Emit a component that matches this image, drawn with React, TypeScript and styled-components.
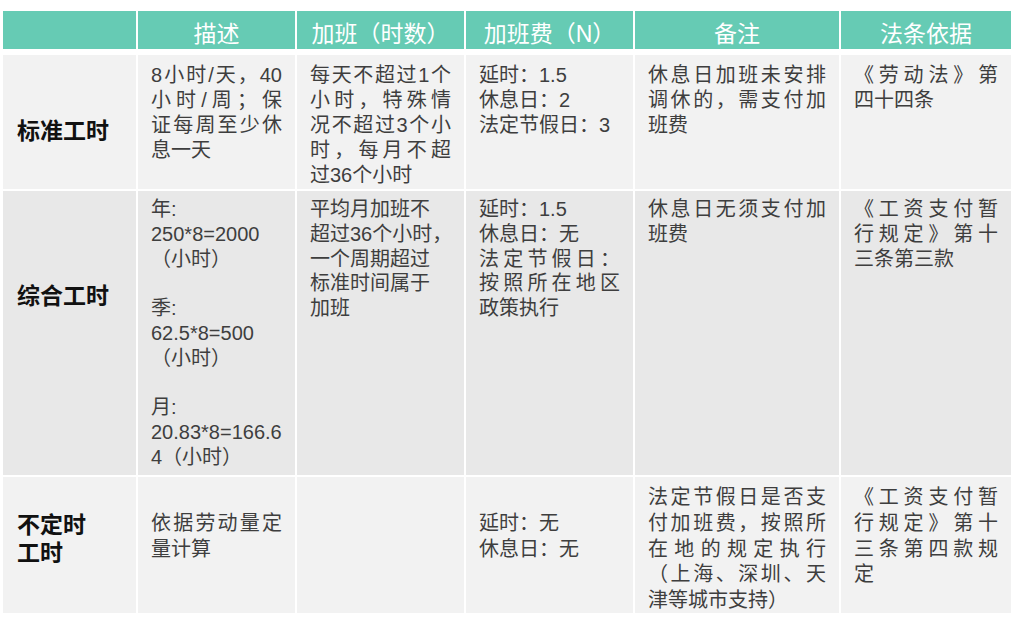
import styled, { createGlobalStyle, css } from "styled-components";

const GlobalStyle = createGlobalStyle`
  html, body {
    margin: 0;
    padding: 0;
    background: #ffffff;
  }
  body {
    font-family: "Liberation Sans", "Noto Sans CJK SC", sans-serif;
  }
`;

const COLS = "133px 157px 167px 167px 204px 170px";

const Page = styled.div`
  width: 1008px;
  padding: 11px 0 0 3px;
`;

const Table = styled.div`
  display: flex;
  flex-direction: column;
  gap: 2px;
`;

const HeaderRow = styled.div`
  display: grid;
  grid-template-columns: ${COLS};
  column-gap: 2px;
  height: 38px;
  margin-bottom: 4px;
`;

const HeadCell = styled.div`
  display: flex;
  align-items: center;
  justify-content: center;
  padding-top: 3px;
  background: #66cbb4;
  color: #ffffff;
  font-size: 23px;
`;

const Row = styled.div<{ $h: number; $bg: string; $lh: number }>`
  --row-bg: ${(p) => p.$bg};
  --row-lh: ${(p) => p.$lh}px;
  display: grid;
  grid-template-columns: ${COLS};
  column-gap: 2px;
  height: ${(p) => p.$h}px;
`;

const Label = styled.div<{ $top: number }>`
  background: var(--row-bg);
  padding: ${(p) => p.$top}px 14px 0;
  font-size: 23px;
  font-weight: 700;
  line-height: 28px;
  color: #111111;
`;

const Cell = styled.div<{ $top: number }>`
  background: var(--row-bg);
  padding: ${(p) => p.$top}px 13px 0;
  font-size: 20px;
  line-height: var(--row-lh);
  color: #3e3e3e;
`;

const Line = styled.div<{ $spread?: boolean }>`
  min-height: var(--row-lh);
  ${(p) =>
    p.$spread
      ? css`
          text-align: justify;
          text-align-last: justify;
        `
      : css`
          white-space: nowrap;
        `}
`;

type CellData = { top: number; paras: string[][] };
type RowData = {
  label: string[];
  labelTop: number;
  height: number;
  lineHeight: number;
  bg: string;
  cells: CellData[];
};

const heads = ["", "描述", "加班（时数）", "加班费（N）", "备注", "法条依据"];

const rows: RowData[] = [
  {
    label: ["标准工时"],
    labelTop: 62,
    height: 134,
    lineHeight: 25,
    bg: "#f2f2f2",
    cells: [
      { top: 8, paras: [["8小时/天，40", "小时/周；保", "证每周至少休", "息一天"]] },
      {
        top: 8,
        paras: [["每天不超过1个", "小时，特殊情", "况不超过3个小", "时，每月不超", "过36个小时"]],
      },
      { top: 8, paras: [["延时：1.5"], ["休息日：2"], ["法定节假日：3"]] },
      { top: 8, paras: [["休息日加班未安排", "调休的，需支付加", "班费"]] },
      { top: 8, paras: [["《劳动法》第", "四十四条"]] },
    ],
  },
  {
    label: ["综合工时"],
    labelTop: 91,
    height: 284,
    lineHeight: 24.8,
    bg: "#e8e8e8",
    cells: [
      {
        top: 6,
        paras: [
          ["年:"],
          ["250*8=2000"],
          ["（小时）"],
          [""],
          ["季:"],
          ["62.5*8=500"],
          ["（小时）"],
          [""],
          ["月:"],
          ["20.83*8=166.6"],
          ["4（小时）"],
        ],
      },
      {
        top: 6,
        paras: [["平均月加班不"], ["超过36个小时，"], ["一个周期超过"], ["标准时间属于"], ["加班"]],
      },
      { top: 6, paras: [["延时：1.5"], ["休息日：无"], ["法定节假日：", "按照所在地区", "政策执行"]] },
      { top: 6, paras: [["休息日无须支付加", "班费"]] },
      { top: 6, paras: [["《工资支付暂", "行规定》第十", "三条第三款"]] },
    ],
  },
  {
    label: ["不定时", "工时"],
    labelTop: 34,
    height: 136,
    lineHeight: 25.75,
    bg: "#f2f2f2",
    cells: [
      { top: 34, paras: [["依据劳动量定", "量计算"]] },
      { top: 8, paras: [] },
      { top: 34, paras: [["延时：无"], ["休息日：无"]] },
      {
        top: 8,
        paras: [["法定节假日是否支", "付加班费，按照所", "在地的规定执行", "（上海、深圳、天", "津等城市支持）"]],
      },
      { top: 8, paras: [["《工资支付暂", "行规定》第十", "三条第四款规", "定"]] },
    ],
  },
];

export default function App() {
  return (
    <Page>
      <GlobalStyle />
      <Table>
        <HeaderRow>
          {heads.map((h, i) => (
            <HeadCell key={i}>{h}</HeadCell>
          ))}
        </HeaderRow>
        {rows.map((r, ri) => (
          <Row key={ri} $h={r.height} $bg={r.bg} $lh={r.lineHeight}>
            <Label $top={r.labelTop}>
              {r.label.map((l, li) => (
                <div key={li}>{l}</div>
              ))}
            </Label>
            {r.cells.map((c, ci) => (
              <Cell key={ci} $top={c.top}>
                {c.paras.map((para, pi) =>
                  para.map((line, li) => (
                    <Line key={pi + "-" + li} $spread={li < para.length - 1}>
                      {line}
                    </Line>
                  ))
                )}
              </Cell>
            ))}
          </Row>
        ))}
      </Table>
    </Page>
  );
}
